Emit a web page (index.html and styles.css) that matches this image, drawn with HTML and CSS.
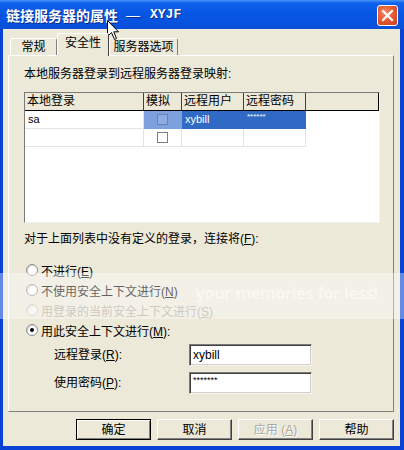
FILE: index.html
```html
<!DOCTYPE html>
<html lang="zh-CN">
<head>
    <meta charset="UTF-8">
    <title>链接服务器的属性 — XYJF</title>
    <link rel="stylesheet" href="styles.css">
</head>
<body>
    <div class="window">
        <div class="titlebar">
            <span class="title">链接服务器的属性<span class="dash">—</span><span class="code">XYJF</span></span>
            <div class="close">
                <svg width="13" height="13" viewBox="0 0 13 13"><path d="M2 2 L11 11 M11 2 L2 11" stroke="#fff" stroke-width="2.2" stroke-linecap="square"/></svg>
            </div>
        </div>

        <div class="client">
            <div class="tabs">
                <div class="tab tab-general">常规</div>
                <div class="tab tab-security active">安全性</div>
                <div class="tab tab-options">服务器选项</div>
            </div>

            <div class="panel">
                <div class="caption">本地服务器登录到远程服务器登录映射:</div>

                <div class="listview">
                    <div class="lv-head">
                        <div class="col c1">本地登录</div>
                        <div class="col c2">模拟</div>
                        <div class="col c3">远程用户</div>
                        <div class="col c4">远程密码</div>
                        <div class="col c5"></div>
                    </div>
                    <div class="lv-row">
                        <div class="cell c1">sa</div>
                        <div class="cell c2 sel-light"><span class="check"></span></div>
                        <div class="cell c3 sel">xybill</div>
                        <div class="cell c4 sel pwd">******</div>
                    </div>
                    <div class="lv-row">
                        <div class="cell c1"></div>
                        <div class="cell c2"><span class="check"></span></div>
                        <div class="cell c3"></div>
                        <div class="cell c4"></div>
                    </div>
                </div>

                <div class="caption caption-2">对于上面列表中没有定义的登录，连接将(<u>F</u>):</div>

                <div class="radios">
                    <div class="radio-row"><span class="radio"></span><span>不进行(<u>E</u>)</span></div>
                    <div class="radio-row"><span class="radio"></span><span>不使用安全上下文进行(<u>N</u>)</span></div>
                    <div class="radio-row disabled"><span class="radio"></span><span>用登录的当前安全上下文进行(<u>S</u>)</span></div>
                    <div class="radio-row"><span class="radio checked"></span><span>用此安全上下文进行(<u>M</u>):</span></div>
                </div>

                <div class="fields">
                    <label class="field-label">远程登录(<u>R</u>):</label>
                    <div class="input">xybill</div>
                    <label class="field-label">使用密码(<u>P</u>):</label>
                    <div class="input pwd">*******</div>
                </div>
            </div>

            <div class="buttons">
                <button class="btn default">确定</button>
                <button class="btn">取消</button>
                <button class="btn" disabled>应用 (<u>A</u>)</button>
                <button class="btn">帮助</button>
            </div>
        </div>

        <!-- photo host watermark band over the dialog -->
        <div class="watermark"><span>your memories for less!</span></div>

        <svg class="cursor" width="13" height="21" viewBox="0 0 13 21">
            <path d="M0.5 0.5 L0.5 16.5 L4.5 12.5 L7.5 19.5 L9.5 18.5 L6.8 11.8 L11.5 11.8 Z" fill="#fff" stroke="#000" stroke-width="1"/>
        </svg>
    </div>
</body>
</html>
```

FILE: styles.css
```css
* {
    box-sizing: border-box;
}
body {
    margin: 0;
    font-family: "Liberation Sans", "Noto Sans CJK SC", sans-serif;
    font-size: 12px;
    color: #000;
    background: #fff;
}
u {
    text-decoration: underline;
}
.window {
    position: relative;
    width: 404px;
    height: 450px;
    display: flex;
    flex-direction: column;
    background: #0843D6;
    overflow: hidden;
}
.titlebar {
    height: 29px;
    flex: none;
    display: flex;
    align-items: center;
    justify-content: space-between;
    padding: 0 6px 0 6px;
    background: linear-gradient(#4A98FA 0, #0E62EE 3px, #0858E6 40%, #0652DE 80%, #0A50D8 100%);
}
.title {
    color: #fff;
    font-family: "Noto Sans CJK SC", sans-serif;
    font-weight: bold;
    font-size: 14px;
    line-height: 16px;
    text-shadow: 1px 1px 0 #0A2C8C;
    white-space: nowrap;
    display: flex;
    align-items: center;
}
.dash {
    margin: 0 10px 0 8px;
    font-family: "Liberation Sans", sans-serif;
    font-weight: normal;
}
.code {
    font-family: "Liberation Mono", monospace;
    font-size: 13px;
}
.close {
    width: 21px;
    height: 21px;
    margin-top: 1px;
    border: 1px solid #fff;
    border-radius: 3px;
    background: radial-gradient(circle at 40% 35%, #F08B68 0, #E2552E 55%, #C8411C 100%);
    display: flex;
    align-items: center;
    justify-content: center;
}
.client {
    flex: 1;
    margin: 0 4px 4px 3px;
    padding: 4px 6px 5px 5px;
    background: #ECE9D8;
    display: flex;
    flex-direction: column;
}
.tabs {
    height: 22px;
    display: flex;
    align-items: flex-end;
    padding-left: 2px;
}
.tab {
    height: 17px;
    line-height: 16px;
    text-align: center;
    border: 1px solid #fff;
    border-right-color: #808080;
    border-bottom: none;
    border-radius: 2px 2px 0 0;
}
.tab-general {
    width: 47px;
}
.tab-security {
    width: 52px;
}
.tab-options {
    width: 69px;
}
.tab.active {
    position: relative;
    z-index: 1;
    height: 23px;
    margin-bottom: -1px;
    line-height: 19px;
    background: #ECE9D8;
    border-right-color: #404040;
}
.panel {
    height: 357px;
    flex: none;
    padding: 11px 13px 0 15px;
    border: 1px solid #fff;
    border-right-color: #808080;
    border-bottom-color: #808080;
}
.caption {
    height: 14px;
    line-height: 14px;
}
.caption-2 {
    margin-top: 9px;
}
.listview {
    margin-top: 11px;
    width: 356px;
    height: 131px;
    background: #fff;
    border: 1px solid;
    border-color: #7A7A7A #F4F4F4 #F4F4F4 #7A7A7A;
}
.lv-head {
    display: flex;
    height: 18px;
    background: #ECE9D8;
    border-bottom: 1px solid #000;
    border-right: 1px solid #000;
}
.col {
    height: 17px;
    line-height: 17px;
    padding-left: 2px;
    border-right: 1px solid #404040;
    white-space: nowrap;
}
.col.c5 {
    flex: 1;
    border-right: none;
}
.c1 {
    width: 119px;
}
.c2 {
    width: 38px;
}
.c3 {
    width: 62px;
}
.c4 {
    width: 62px;
}
.lv-row {
    display: flex;
    width: 281px;
    height: 18px;
}
.cell {
    height: 18px;
    line-height: 17px;
    padding-left: 3px;
    border-right: 1px solid #E4E3DE;
    border-bottom: 1px solid #E4E3DE;
    font-size: 11px;
    white-space: nowrap;
}
.cell.c2 {
    display: flex;
    align-items: center;
    justify-content: center;
    padding-left: 0;
}
.sel {
    background: #316AC5;
    color: #fff;
    border-right-color: #316AC5;
    border-bottom-color: #316AC5;
}
.sel-light {
    background: #7DA0DE;
    border-right-color: #7DA0DE;
    border-bottom-color: #7DA0DE;
}
.check {
    width: 11px;
    height: 11px;
    border: 1px solid #7E7E7E;
    background: #fff;
}
.sel-light .check {
    border-color: #6A82B0;
    background: #8FACE2;
}
.pwd {
    font-size: 8px;
    line-height: 12px;
}
.radios {
    margin-top: 14px;
    padding-left: 2px;
}
.radio-row {
    height: 20px;
    display: flex;
    align-items: center;
    gap: 3px;
}
.radio-row.disabled {
    color: #ACA899;
}
.radio {
    width: 12px;
    height: 12px;
    border-radius: 50%;
    background: #fff;
    border: 1px solid #8E8F8F;
    box-shadow: inset 1px 1px 0 #D4D0C8;
    display: flex;
    align-items: center;
    justify-content: center;
}
.disabled .radio {
    border-color: #CAC8BB;
    background: #F4F3EE;
}
.radio.checked::after {
    content: "";
    width: 4px;
    height: 4px;
    border-radius: 50%;
    background: #000;
}
.fields {
    margin-top: 4px;
    padding-left: 30px;
    display: grid;
    grid-template-columns: 135px 123px;
    grid-auto-rows: 22px;
    row-gap: 6px;
    align-items: center;
}
.field-label {
    line-height: 14px;
}
.input {
    height: 22px;
    padding: 3px 0 0 3px;
    background: #fff;
    border: 1px solid;
    border-color: #7A7A7A #F4F4F4 #F4F4F4 #7A7A7A;
    box-shadow: inset 1px 1px 0 #404040, inset -1px -1px 0 #D4D0C8;
    font-size: 12px;
    line-height: 14px;
}
.input.pwd {
    font-size: 9px;
    line-height: 10px;
    padding-top: 2px;
}
.buttons {
    margin-top: 7px;
    display: flex;
    justify-content: flex-end;
    gap: 6px;
}
.btn {
    width: 75px;
    height: 21px;
    padding: 0;
    font-family: "Liberation Sans", "Noto Sans CJK SC", sans-serif;
    font-size: 12px;
    line-height: 14px;
    color: #000;
    background: #ECE9D8;
    border: 1px solid;
    border-color: #fff #404040 #404040 #fff;
    box-shadow: inset -1px -1px 0 #808080;
}
.btn.default {
    border: 1px solid #000;
    box-shadow: inset 1px 1px 0 #fff, inset -1px -1px 0 #808080;
}
.btn:disabled {
    color: #ACA899;
    text-shadow: 1px 1px 0 #fff;
}
.watermark {
    position: absolute;
    left: 0;
    top: 273px;
    width: 404px;
    height: 46px;
    background: rgba(255, 255, 255, 0.38);
    padding: 0 26px 6px 0;
    display: flex;
    align-items: center;
    justify-content: flex-end;
    pointer-events: none;
}
.watermark span {
    font-family: "Open Sans", sans-serif;
    font-weight: 600;
    font-size: 16px;
    line-height: 16px;
    color: rgba(255, 255, 255, 0.55);
    white-space: nowrap;
}
.cursor {
    position: absolute;
    left: 107px;
    top: 20px;
}
```
